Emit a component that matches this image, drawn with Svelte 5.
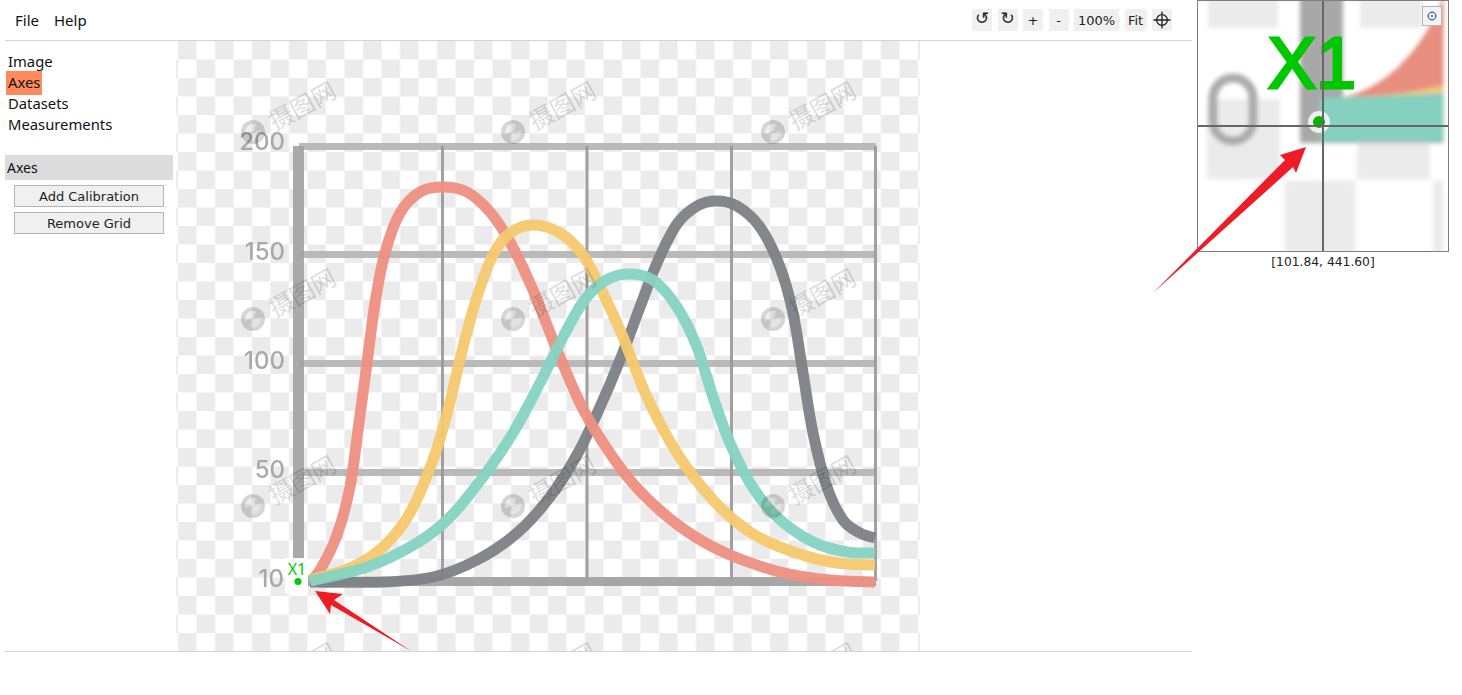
<script>
	const cols = [0, 1, 2];
	const rows = [0, 1, 2, 3];

	const curves = [
		{
			color: '#7e8286',
			points: [[310,582],[383,582],[433,577],[477,560],[517,533],[550,497],[578,453],[600,407],[620,360],[640,307],[657,263],[677,224],[697,206],[716,201],[737,206],[760,227],[780,267],[793,313],[803,373],[813,433],[827,487],[843,520],[860,533],[875,538]]
		},
		{
			color: '#ed9183',
			points: [[310,581],[320,570],[337,535],[350,487],[358,430],[367,363],[375,303],[385,253],[400,213],[420,192],[443,187],[467,192],[490,212],[510,242],[533,290],[557,350],[580,403],[600,438],[630,480],[663,513],[697,538],[730,555],[780,572],[830,580],[875,582]]
		},
		{
			color: '#f6c96e',
			points: [[310,580],[350,568],[383,547],[410,513],[433,460],[448,410],[463,347],[477,297],[493,255],[510,233],[533,225],[560,233],[583,255],[603,293],[623,337],[647,397],[677,453],[713,500],[747,530],[780,547],[830,562],[875,565]]
		},
		{
			color: '#85d3c3',
			points: [[310,581],[367,567],[417,543],[450,517],[483,477],[513,433],[540,383],[563,337],[583,302],[603,282],[627,274],[653,280],[677,307],[697,347],[713,397],[730,443],[750,483],[777,517],[813,542],[847,552],[875,553]]
		}
	];

	// catmull-rom through the points, as cubic segments
	function smooth(p) {
		let d = `M${p[0][0]} ${p[0][1]}`;
		for (let i = 0; i < p.length - 1; i++) {
			const a = p[i - 1] || p[i];
			const b = p[i];
			const c = p[i + 1];
			const e = p[i + 2] || c;
			const x1 = b[0] + (c[0] - a[0]) / 6;
			const y1 = b[1] + (c[1] - a[1]) / 6;
			const x2 = c[0] - (e[0] - b[0]) / 6;
			const y2 = c[1] - (e[1] - b[1]) / 6;
			d += ` C${x1} ${y1} ${x2} ${y2} ${c[0]} ${c[1]}`;
		}
		return d;
	}
</script>

<div class="page">
	<div class="left">
		<header class="topbar">
			<nav class="menu">
				<span>File</span>
				<span>Help</span>
			</nav>
			<div class="tools">
				<button class="rot">↺</button>
				<button class="rot">↻</button>
				<button>+</button>
				<button>-</button>
				<button class="wide">100%</button>
				<button class="fit">Fit</button>
				<button aria-label="Center">
					<svg width="18" height="18" viewBox="0 0 18 18" fill="none" stroke="#222" stroke-width="1.3">
						<circle cx="9" cy="9" r="5.4" />
						<path d="M9 .5v17M.5 9h17" />
					</svg>
				</button>
			</div>
		</header>

		<main class="workspace">
			<aside class="sidebar">
				<ul class="steps">
					<li>Image</li>
					<li><span class="active">Axes</span></li>
					<li>Datasets</li>
					<li>Measurements</li>
				</ul>
				<div class="panel-title">Axes</div>
				<div class="panel-body">
					<button>Add Calibration</button>
					<button>Remove Grid</button>
				</div>
			</aside>

			<div class="canvas">
				<svg width="744" height="610" viewBox="176 41 744 610">
					<defs>
						<filter id="soft"><feGaussianBlur stdDeviation="0.7" /></filter>
						<pattern id="checker" patternUnits="userSpaceOnUse" x="159.500" y="41" width="37" height="37">
							<rect x="18.500" y="0" width="18.500" height="18.500" fill="#ebebeb" />
							<rect x="0" y="18.500" width="18.500" height="18.500" fill="#ebebeb" />
						</pattern>
					</defs>
					<g filter="url(#soft)">
						<rect x="176" y="41" width="744" height="620" fill="url(#checker)" />
						<g class="lines">
							<rect x="299" y="143" width="577" height="7" fill="#b4b4b4" />
							<rect x="299" y="251" width="576" height="7" fill="#b4b4b4" />
							<rect x="299" y="360" width="576" height="7" fill="#b4b4b4" />
							<rect x="299" y="469" width="576" height="7" fill="#b4b4b4" />
							<rect x="441" y="146" width="3" height="435" fill="#999" />
							<rect x="585.500" y="146" width="3" height="435" fill="#999" />
							<rect x="730" y="146" width="3" height="435" fill="#999" />
							<rect x="874" y="146" width="3" height="435" fill="#999" />
							<rect x="293" y="146" width="11" height="440" fill="#a3a3a3" />
							<rect x="299" y="577" width="577" height="9" fill="#a0a0a0" />
						</g>
						<g class="labels">
							<text x="285" y="150">200</text>
							<text x="285" y="260">150</text>
							<text x="285" y="369">100</text>
							<text x="285" y="478">50</text>
							<text x="284" y="587">10</text>
						</g>
						{#each curves as c}
							<path d={smooth(c.points)} fill="none" stroke={c.color} stroke-width="11" opacity="0.96" />
						{/each}
						{#each rows as r}
							{#each cols as c}
								<g class="mark" transform="translate({253 + c * 260} {132 + r * 187})">
									<circle r="12" fill="#d6d6d6" />
									<path d="M-8 2 A9 9 0 0 1 3 -8 L1 -1 Z" fill="#fff" opacity="0.6" />
									<path d="M8 -2 A9 9 0 0 1 -3 8 L-1 1 Z" fill="#fff" opacity="0.35" />
									<text x="20" y="10" transform="rotate(-29)">摄图网</text>
								</g>
							{/each}
						{/each}
					</g>

					<rect x="285" y="558" width="23" height="35" fill="#fff" opacity="0.95" />
					<text class="x1" x="297" y="575">X1</text>
					<circle cx="298" cy="581.500" r="3.500" fill="#00cc00" />
				</svg>
			</div>
		</main>

		<div class="statusbar"></div>
	</div>

	<aside class="right">
		<div class="zoom-view">
			<svg width="250" height="250" viewBox="0 0 250 250">
				<defs>
					<filter id="softer"><feGaussianBlur stdDeviation="2.200" /></filter>
					<filter id="softest"><feGaussianBlur stdDeviation="0.700" /></filter>
				</defs>
				<rect x="0" y="0" width="250" height="250" fill="#fff" />
				<g filter="url(#softer)">
					<rect x="10" y="-10" width="70" height="37" fill="#ebebeb" />
					<rect x="162" y="-10" width="62" height="37" fill="#ebebeb" />
					<rect x="9" y="98" width="73" height="80" fill="#ebebeb" />
					<rect x="159" y="98" width="73" height="80" fill="#ebebeb" />
					<rect x="87" y="180" width="70" height="72" fill="#ebebeb" />
					<rect x="235" y="180" width="10" height="72" fill="#ebebeb" />
					<rect x="102" y="-10" width="43" height="152" fill="#a8a8a8" />
					<rect x="15" y="77" width="40" height="63" rx="20" fill="none" stroke="#ababab" stroke-width="9" />
					<path d="M135 98 C185 92 225 50 246 -6 V90 Z" fill="#e88f80" />
					<path d="M135 98 L246 92 V84 C210 92 180 96 135 98 Z" fill="#f3c878" />
					<path d="M122 97 L246 92 V142 H122 Z" fill="#86d0c0" />
					<rect x="122" y="140" width="124" height="2" fill="#9bb3ad" />
					<rect x="246" y="-10" width="14" height="270" fill="#fff" />
				</g>
				<text class="x1-big" x="70" y="87" filter="url(#softest)">X1</text>
				<circle cx="121" cy="121" r="11" fill="#fff" opacity="0.8" filter="url(#softest)" />
				<circle cx="121" cy="121" r="6" fill="#00b400" filter="url(#softest)" />
				<path d="M125 0V250M0 125H250" stroke="#666" stroke-width="2" />
			</svg>
			<button class="gear" aria-label="Settings">
				<svg width="12" height="12" viewBox="0 0 12 12" fill="none" stroke="#2f5f9f" stroke-width="1.100">
					<circle cx="6" cy="6" r="3.800" />
					<circle cx="6" cy="6" r="1" fill="#2f5f9f" stroke="none" />
					<path d="M6 1v1M6 10v1M1 6h1M10 6h1" stroke-width="0.800" />
				</svg>
			</button>
		</div>
		<div class="coords">[101.84, 441.60]</div>
	</aside>

	<svg class="arrows" width="1462" height="695" viewBox="0 0 1462 695">
		<path d="M315 591 L343 594 L334 600 L411 651 L331 605 L330 614 Z" fill="#ee1c25" />
		<path d="M1306 147 L1296 173 L1293 167 L1153 293 L1285 160 L1280 155 Z" fill="#ee1c25" />
	</svg>
</div>

<style>
	:global(body) {
		margin: 0;
		background: #fff;
	}

	.page {
		position: relative;
		display: flex;
		height: 695px;
		width: 1462px;
		overflow: hidden;
		font-family: "Noto Sans", sans-serif;
		color: #111;
	}

	.left {
		width: 1187px;
		margin-left: 5px;
		flex: none;
	}

	.topbar {
		display: flex;
		justify-content: space-between;
		align-items: center;
		height: 40px;
		border-bottom: 1px solid #d4d4d4;
	}

	.menu {
		display: flex;
		gap: 15px;
		padding-left: 10px;
		font-size: 15px;
	}

	.tools {
		display: flex;
		gap: 5.500px;
		margin-right: 20px;
	}

	.tools button {
		display: flex;
		align-items: center;
		justify-content: center;
		width: 20px;
		height: 22px;
		padding: 0;
		border: none;
		background: #f0f0f0;
		font-family: "DejaVu Sans", sans-serif;
		font-size: 13px;
		color: #222;
	}

	.tools .rot {
		padding-bottom: 4px;
		font-size: 17px;
	}

	.tools .wide {
		width: 45px;
	}

	.tools .fit {
		width: 22px;
	}

	.workspace {
		display: flex;
		height: 610px;
	}

	.sidebar {
		width: 171px;
		flex: none;
	}

	.steps {
		list-style: none;
		margin: 0;
		padding: 10px 0 0 3px;
		font-size: 14.800px;
		line-height: 21px;
	}

	.active {
		display: inline-block;
		padding: 1.500px 2px;
		margin: -1.500px -2px;
		background: #ff8a5c;
	}

	.panel-title {
		width: 168px;
		height: 25px;
		margin-top: 20px;
		padding-left: 2px;
		box-sizing: border-box;
		background: #dcdcdc;
		font-size: 14px;
		line-height: 25px;
	}

	.panel-body {
		display: flex;
		flex-direction: column;
		gap: 5px;
		padding: 5px 0 0 9px;
	}

	.panel-body button {
		width: 150px;
		height: 22px;
		padding: 0;
		border: 1px solid #b4b4b4;
		background: #f0f0f0;
		font-family: "DejaVu Sans", sans-serif;
		font-size: 13px;
		color: #222;
	}

	.canvas {
		width: 744px;
		height: 610px;
		flex: none;
	}

	.canvas svg {
		display: block;
	}

	.lines rect {
		opacity: 0.92;
	}

	.labels text {
		font-family: "Inter", sans-serif;
		font-size: 24px;
		font-weight: 500;
		fill: #a9a9a9;
		text-anchor: end;
	}

	.mark {
		mix-blend-mode: multiply;
	}

	.mark text {
		font-family: "Noto Sans CJK SC", sans-serif;
		font-size: 24px;
		fill: #dedede;
	}

	.x1 {
		font-family: "Noto Sans", sans-serif;
		font-size: 16px;
		fill: #00cc00;
		text-anchor: middle;
	}

	.statusbar {
		border-top: 1px solid #d4d4d4;
	}

	.right {
		flex: none;
		width: 252px;
		margin-left: 5px;
	}

	.zoom-view {
		position: relative;
		width: 250px;
		height: 250px;
		border: 1px solid #7f7f7f;
	}

	.zoom-view svg {
		display: block;
	}

	.x1-big {
		font-family: "Liberation Sans", sans-serif;
		font-size: 72px;
		fill: #00c800;
		stroke: #00c800;
		stroke-width: 3;
	}

	.gear {
		position: absolute;
		top: 5px;
		right: 6px;
		display: flex;
		align-items: center;
		justify-content: center;
		width: 20px;
		height: 20px;
		padding: 0;
		border: 1px solid #b4b4b4;
		background: #f4f4f4;
	}

	.coords {
		margin-top: 3px;
		text-align: center;
		font-family: "DejaVu Sans", sans-serif;
		font-size: 12.300px;
		color: #222;
	}

	.arrows {
		position: absolute;
		top: 0;
		left: 0;
		pointer-events: none;
	}
</style>
